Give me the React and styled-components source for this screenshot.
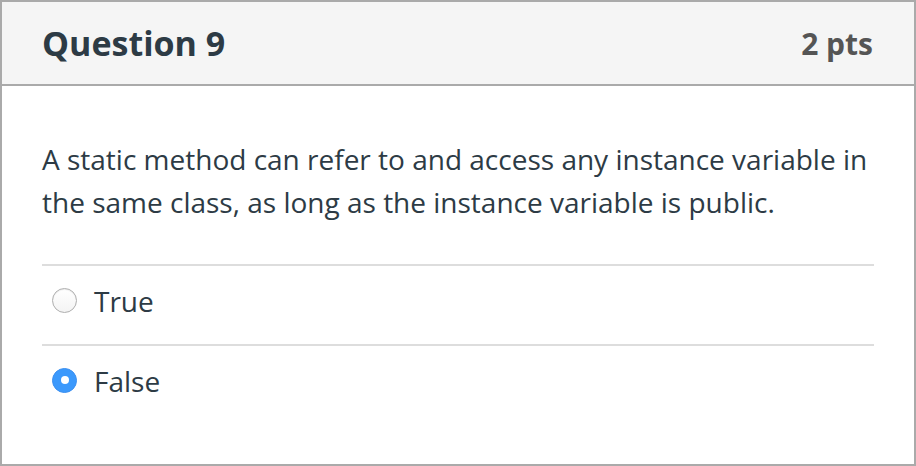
import React from "react";
import styled, { createGlobalStyle } from "styled-components";

const Global = createGlobalStyle`
  html, body { margin: 0; padding: 0; background: #fff; }
  * { box-sizing: border-box; }
`;

const Card = styled.div`
  width: 916px;
  height: 466px;
  border: 2px solid #aaaaaa;
  font-family: "Open Sans", "Liberation Sans", sans-serif;
  color: #2d3b45;
  display: flex;
  flex-direction: column;
  overflow: hidden;
`;

const Header = styled.div`
  height: 84px;
  flex: none;
  background: #f5f5f5;
  border-bottom: 2px solid #aaaaaa;
  padding: 0 41px 0 40px;
  display: flex;
  align-items: center;
  justify-content: space-between;
`;

const Title = styled.h2`
  margin: 0;
  font-size: 34px;
  font-weight: 700;
  color: #2d3b45;
`;

const Points = styled.span`
  font-size: 30px;
  font-weight: 700;
  color: #555555;
`;

const Body = styled.div`
  padding: 52px 40px 0;
`;

const Question = styled.p`
  margin: 0 0 40px;
  font-size: 28px;
  line-height: 43px;
`;

const Answer = styled.label`
  display: flex;
  align-items: center;
  gap: 17px;
  height: 80px;
  padding: 14px 0 24px 10px;
  border-top: 2px solid #dddddd;
  font-size: 28px;
  color: #2d3b45;
`;

const Label = styled.span`
  position: relative;
  top: 1px;
`;

const Radio = styled.span`
  width: 25px;
  height: 25px;
  border-radius: 50%;
  flex: none;
  display: flex;
  align-items: center;
  justify-content: center;
  ${(p) =>
    p.$checked
      ? `background: #3b99fc; border: 1px solid #3b8ff0;`
      : `background: linear-gradient(#ffffff, #f4f4f4); border: 1px solid #aeaeae; box-shadow: inset 0 1px 1px rgba(0,0,0,0.08);`}
`;

const Dot = styled.span`
  width: 8px;
  height: 8px;
  border-radius: 50%;
  background: #ffffff;
`;

export default function App() {
  return (
    <>
      <Global />
      <Card>
        <Header>
          <Title>Question 9</Title>
          <Points>2 pts</Points>
        </Header>
        <Body>
          <Question>
            A static method can refer to and access any instance variable in the
            same class, as long as the instance variable is public.
          </Question>
          <Answer>
            <Radio />
            <Label>True</Label>
          </Answer>
          <Answer>
            <Radio $checked>
              <Dot />
            </Radio>
            <Label>False</Label>
          </Answer>
        </Body>
      </Card>
    </>
  );
}
